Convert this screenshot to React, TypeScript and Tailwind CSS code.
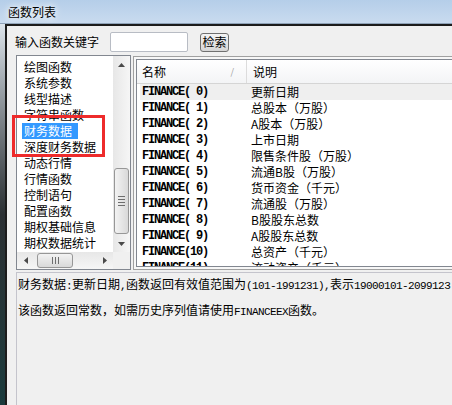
import React from 'react';

const CATEGORIES = [
    '绘图函数',
    '系统参数',
    '线型描述',
    '字符串函数',
    '财务数据',
    '深度财务数据',
    '动态行情',
    '行情函数',
    '控制语句',
    '配置函数',
    '期权基础信息',
    '期权数据统计',
];

const ROWS = [
    '更新日期',
    '总股本（万股）',
    'A股本（万股）',
    '上市日期',
    '限售条件股（万股）',
    '流通B股（万股）',
    '货币资金（千元）',
    '流通股（万股）',
    'B股股东总数',
    'A股股东总数',
    '总资产（千元）',
    '流动资产（千元）',
];

const mono = "font-['Liberation_Mono',monospace] text-[11px] tracking-[-0.6px]";
const rowMono = "font-['Liberation_Mono',monospace] text-[12px] tracking-[-1.2px] font-bold";

function Arrow({ dir }: { dir: 'up' | 'down' | 'left' | 'right' }) {
    const pts = {
        up: '0,4 3.5,0 7,4',
        down: '0,0 7,0 3.5,4',
        left: '4,0 4,7 0,3.5',
        right: '0,0 4,3.5 0,7',
    }[dir];
    const vertical = dir === 'up' || dir === 'down';
    return (
        <svg width={vertical ? 7 : 4} height={vertical ? 4 : 7} viewBox={vertical ? '0 0 7 4' : '0 0 4 7'}>
            <polygon points={pts} fill="#4a4a4a" />
        </svg>
    );
}

export default function App() {
    return (
        <div className="relative w-[452px] h-[405px] overflow-hidden flex flex-col bg-[#f0f0f0] text-black text-[12px] font-['Noto_Sans_CJK_SC',sans-serif]">
            {/* title bar */}
            <div className="h-[24px] shrink-0 flex items-center pl-[8px] bg-linear-to-b from-[#b5cee9] to-[#c9dbef] border-b border-[#8ea2b8]">
                <span className="leading-none [text-shadow:0_0_6px_#fff,0_0_10px_#fff]">函数列表</span>
            </div>

            <div className="flex flex-1 min-h-0">
                {/* window frame */}
                <div className="w-[5px] bg-linear-to-b from-[#dde5ec] via-[#2b3033] to-[#1a3b3d]" />

                <div className="flex-1 flex flex-col border-l-2 border-t-2 border-[#1c1c1c] min-w-0">
                    {/* search row */}
                    <div className="mt-[6px] h-[20px] flex items-center pl-[8px]">
                        <span className="leading-none">输入函数关键字</span>
                        <div className="ml-[11px] w-[78px] h-[20px] border border-[#b8bcc4] rounded-[2px] bg-white" />
                        <button className="ml-[12px] w-[29px] h-[19px] border border-[#707070] rounded-[3px] bg-linear-to-b from-[#f4f4f4] to-[#d6d6d6] flex items-center justify-center leading-none">
                            检索
                        </button>
                    </div>

                    {/* lists */}
                    <div className="mt-[3px] flex items-start pl-[9px]">
                        {/* category list */}
                        <div className="w-[115px] h-[215px] shrink-0 border border-[#828790] bg-white flex flex-col">
                            <div className="flex flex-1 min-h-0">
                                <div className="flex-1 pt-[3px] pl-[5px] overflow-hidden">
                                    {CATEGORIES.map((c) => (
                                        <div key={c} className="h-[16px] leading-[16px] whitespace-nowrap">
                                            {c === '财务数据' ? (
                                                <span className="inline-block pl-[2px] pr-[6px] bg-[#3399ff] text-white">{c}</span>
                                            ) : (
                                                <span className="pl-[2px]">{c}</span>
                                            )}
                                        </div>
                                    ))}
                                </div>
                                <div className="w-[17px] flex flex-col bg-linear-to-r from-[#e7e7e7] to-[#f6f6f6]">
                                    <div className="h-[17px] flex items-center justify-center">
                                        <Arrow dir="up" />
                                    </div>
                                    <div className="flex-1" />
                                    <div className="h-[66px] mx-[1px] mb-[1px] rounded-[3px] border border-[#979797] bg-linear-to-r from-[#f3f3f3] to-[#d9d9d9] flex flex-col items-center justify-center gap-[2px]">
                                        <div className="w-[7px] h-px bg-[#6e6e6e]" />
                                        <div className="w-[7px] h-px bg-[#6e6e6e]" />
                                        <div className="w-[7px] h-px bg-[#6e6e6e]" />
                                        <div className="w-[7px] h-px bg-[#6e6e6e]" />
                                    </div>
                                    <div className="h-[17px] flex items-center justify-center">
                                        <Arrow dir="down" />
                                    </div>
                                </div>
                            </div>
                            <div className="h-[17px] flex">
                                <div className="flex-1 flex items-center bg-linear-to-b from-[#e7e7e7] to-[#f6f6f6]">
                                    <div className="w-[17px] h-full flex items-center justify-center">
                                        <Arrow dir="left" />
                                    </div>
                                    <div className="ml-[3px] w-[36px] h-[15px] rounded-[3px] border border-[#979797] bg-linear-to-b from-[#f3f3f3] to-[#d9d9d9] flex items-center justify-center gap-[2px]">
                                        <div className="w-px h-[7px] bg-[#6e6e6e]" />
                                        <div className="w-px h-[7px] bg-[#6e6e6e]" />
                                        <div className="w-px h-[7px] bg-[#6e6e6e]" />
                                    </div>
                                    <div className="flex-1" />
                                    <div className="w-[17px] h-full flex items-center justify-center">
                                        <Arrow dir="right" />
                                    </div>
                                </div>
                                <div className="w-[17px] bg-[#f0f0f0]" />
                            </div>
                        </div>

                        {/* function list view */}
                        <div className="ml-[2px] mt-[1px] flex-1 h-[214px] border-l border-y border-[#a0a0a0] bg-[#f7f7f7] pl-[2px] py-[2px]">
                            <div className="h-full border-l border-y border-[#828790] bg-white flex flex-col overflow-hidden">
                                <div className="h-[24px] shrink-0 flex border-b border-[#d5d5d5] bg-linear-to-b from-white to-[#f3f4f6]">
                                    <div className="w-[110px] flex items-center justify-between pl-[5px] pr-[12px] border-r border-[#dcdcdc]">
                                        <span className="leading-none">名称</span>
                                        <span className="text-[9px] text-[#9a9a9a] leading-none">/</span>
                                    </div>
                                    <div className="flex items-center pl-[6px]">
                                        <span className="leading-none">说明</span>
                                    </div>
                                </div>
                                <div className="flex-1 pl-[3px] overflow-hidden">
                                    {ROWS.map((r, i) => (
                                        <div
                                            key={i}
                                            className={
                                                'h-[16px] flex items-center whitespace-pre ' +
                                                (i === 0 ? 'bg-[#efefef]' : '')
                                            }
                                        >
                                            <span className={'w-[111px] shrink-0 pl-[2px] leading-[16px] ' + rowMono}>
                                                {`FINANCE(${i < 10 ? ' ' + i : i})`}
                                            </span>
                                            <span className="leading-[16px]">{r}</span>
                                        </div>
                                    ))}
                                </div>
                            </div>
                        </div>
                    </div>

                    {/* description */}
                    <div className="mt-[2px] ml-[9px] flex-1 border-l border-t border-[#c4c4cc] pl-[1px] pt-[3px] whitespace-nowrap overflow-hidden">
                        <div className="h-[16px] leading-[16px]">
                            财务数据<span className={mono}>:</span>更新日期<span className={mono}>,</span>
                            函数返回有效值范围为<span className={mono}>(101-1991231),</span>表示
                            <span className={mono}>19000101-2099123</span>
                        </div>
                        <div className="mt-[10px] h-[16px] leading-[16px]">
                            该函数返回常数，如需历史序列值请使用<span className={mono}>FINANCEEX</span>函数。
                        </div>
                    </div>
                </div>
            </div>

            {/* red highlight annotation */}
            <div className="absolute left-[12px] top-[115px] w-[93px] h-[42px] border-[3px] border-[#ee2b2b] pointer-events-none" />
        </div>
    );
}
